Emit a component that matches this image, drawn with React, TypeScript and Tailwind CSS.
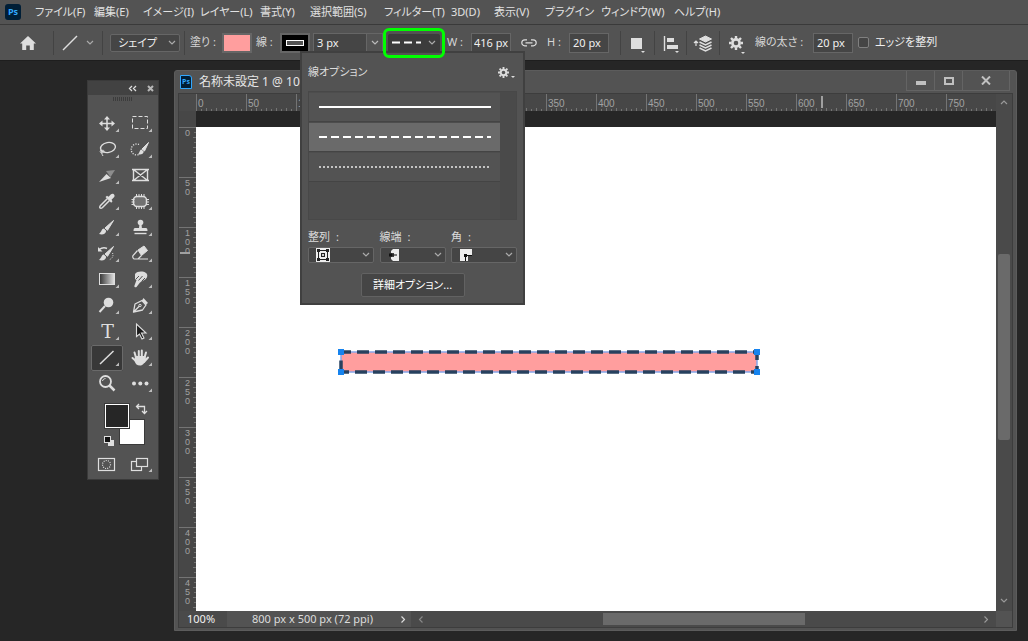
import type { ReactNode } from "react";
import clsx from "clsx";

const menus = [
  { label: "ファイル(F)", width: "w-[59px]" },
  { label: "編集(E)", width: "w-[49px]" },
  { label: "イメージ(I)", width: "w-[57px]" },
  { label: "レイヤー(L)", width: "w-[60px]" },
  { label: "書式(Y)", width: "w-[50px]" },
  { label: "選択範囲(S)", width: "w-[74px]" },
  { label: "フィルター(T)", width: "w-[67px]" },
  { label: "3D(D)", width: "w-[43px]" },
  { label: "表示(V)", width: "w-[51px]" },
  { label: "プラグイン", width: "w-[56px]" },
  { label: "ウィンドウ(W)", width: "w-[73px]" },
  { label: "ヘルプ(H)", width: "w-[59px]" },
];

const topMarks = Array.from({ length: 16 }, (_, i) => i * 50);
const leftMarks = Array.from({ length: 10 }, (_, i) => i * 50);
const minorTicks = [5, 10, 15, 20, 25, 30, 35, 40, 45];

function Chevron({ className }: { className?: string }) {
  return (
    <svg width="8" height="5" viewBox="0 0 8 5" fill="none" className={clsx("pointer-events-none shrink-0", className)}>
      <path d="M1 1l3 3 3-3" stroke="currentColor" strokeWidth="1.2" />
    </svg>
  );
}

function Separator({ className }: { className?: string }) {
  return <span className={clsx("h-6 w-px shrink-0 bg-[#434343]", className)} />;
}

function Gear({ size }: { size: number }) {
  return (
    <svg width={size} height={size} viewBox="0 0 14 14" fill="none" stroke="currentColor">
      <circle cx="7" cy="7" r="3.6" strokeWidth="2.6" />
      <path d="M7 0v2.5M7 11.5V14M0 7h2.5M11.5 7H14M2 2l1.8 1.8M10.2 10.2L12 12M2 12l1.8-1.8M10.2 3.8L12 2" strokeWidth="2.4" />
    </svg>
  );
}

function PsMark({ className }: { className: string }) {
  return (
    <span
      className={clsx(
        "flex shrink-0 items-center justify-center bg-[#001e36] font-[Open_Sans,sans-serif] font-bold text-[#31a8ff]",
        className
      )}
    >
      Ps
    </span>
  );
}

function MenuBar() {
  return (
    <header className="flex h-6 items-center pl-1.25">
      <PsMark className="mr-3.5 h-4 w-4 rounded-[3px] text-[9px]" />
      <nav className="flex">
        {menus.map((m) => (
          <button key={m.label} type="button" className={clsx("text-left text-[11px] whitespace-nowrap text-[#e2e2e2]", m.width)}>
            {m.label}
          </button>
        ))}
      </nav>
    </header>
  );
}

function PxInput({ id, label, value, className }: { id?: string; label?: string; value: string; className?: string }) {
  return (
    <input
      id={id}
      aria-label={label}
      defaultValue={value}
      className={clsx("h-5 shrink-0 border border-[#666] bg-[#454545] text-[11px] text-[#f0f0f0] outline-none", className)}
    />
  );
}

function IconButton({ label, className, children }: { label: string; className?: string; children: ReactNode }) {
  return (
    <button type="button" aria-label={label} className={clsx("shrink-0 text-[#dedede]", className)}>
      <svg width="20" height="20" viewBox="0 0 20 20" fill="none" stroke="currentColor">
        {children}
      </svg>
    </button>
  );
}

function OptionsBar() {
  return (
    <div className="flex h-9 items-center border-t border-[#3a3a3a] pl-4.5 text-[11px] text-[#d6d6d6]">
      <IconButton label="ホーム">
        <path d="M10 3L2 10.5h2.2V17h4v-4.5h3.6V17h4v-6.5H18z" fill="currentColor" stroke="none" />
      </IconButton>
      <Separator className="ml-3.75" />
      <IconButton label="ラインツール" className="ml-1.5">
        <path d="M3 17L17 3" strokeWidth="1.5" />
      </IconButton>
      <Chevron className="ml-1.5 text-[#aaa]" />
      <Separator className="ml-2" />

      <div className="relative ml-1.75 flex shrink-0 items-center">
        <select
          aria-label="ツールモード"
          className="h-4.5 w-17.5 appearance-none rounded-[2px] border border-[#666] bg-[#454545] pl-1.75 text-[11px] text-[#ececec]"
        >
          <option>シェイプ</option>
          <option>パス</option>
        </select>
        <Chevron className="absolute right-1 text-[#aaa]" />
      </div>
      <Separator className="ml-1" />

      <span className="ml-1.25 w-8 shrink-0 whitespace-nowrap">塗り :</span>
      <button type="button" aria-label="塗り" className="h-5 w-7.5 shrink-0 border-2 border-[#666] bg-[#ff9e9e]" />
      <span className="ml-1 w-5.5 shrink-0 whitespace-nowrap">線 :</span>
      <button type="button" aria-label="線" className="ml-0.5 flex h-5 w-7.5 shrink-0 items-center justify-center border-2 border-[#666] bg-black">
        <span className="h-1.5 w-4.5 border border-white bg-[#535353]" />
      </button>

      <PxInput label="線幅" value="3 px" className="ml-0.75 w-13.5 pl-0.75" />
      <button type="button" aria-label="線幅の候補" className="flex h-5 w-4 shrink-0 items-center justify-center border border-l-0 border-[#666] text-[#bbb]">
        <Chevron />
      </button>

      <div className="relative z-20 flex h-7.5 w-15.5 shrink-0 items-center justify-center rounded-[6px] border-3 border-[#0f0]">
        <select aria-label="線の種類" className="h-4.5 w-13 appearance-none rounded-[2px] bg-[#3c3c3c]">
          <option value="dashed" aria-label="破線" />
        </select>
        <svg width="30" height="3" viewBox="0 0 30 3" className="pointer-events-none absolute left-1.5">
          <path d="M0 1.5h8M12 1.5h8M24 1.5h5" stroke="#fff" strokeWidth="2" />
        </svg>
        <Chevron className="absolute right-1.5 text-[#aaa]" />
      </div>

      <span className="ml-0.5 w-6 shrink-0 whitespace-nowrap">W :</span>
      <PxInput label="幅" value="416 px" className="w-10 pl-0.5" />
      <IconButton label="縦横比を固定" className="ml-2">
        <path d="M8 6.800H5.800a3 3 0 000 6H8M12 6.800h2.200a3 3 0 010 6H12M6.500 9.800h7" strokeWidth="1.200" />
      </IconButton>
      <span className="ml-2 w-5.5 shrink-0 whitespace-nowrap">H :</span>
      <PxInput label="高さ" value="20 px" className="w-10 pl-0.75" />

      <Separator className="ml-2.75" />
      <IconButton label="パスの操作" className="ml-1.75">
        <path d="M3 5h11v11H3z" fill="currentColor" stroke="none" />
        <path d="M13 18h4l-2 2z" fill="currentColor" stroke="none" />
      </IconButton>
      <Separator className="ml-1.5" />
      <IconButton label="パスの整列" className="ml-1.75">
        <path d="M2.5 3v15" strokeWidth="1.4" />
        <path d="M5 5h7v4H5zM5 12h11v4H5zM13 18h4l-2 2z" fill="currentColor" stroke="none" />
      </IconButton>
      <Separator className="ml-1" />
      <IconButton label="パスの配置" className="ml-1.5">
        <path d="M3 13V8.5M1 10l2-2 2 2" strokeWidth="1.2" />
        <path d="M6.5 6L12.5 3l6 3-6 3z" fill="currentColor" />
        <path d="M6.5 9l6 3 6-3M6.5 12l6 3 6-3M6.5 15l6 3 6-3" strokeWidth="1.4" />
      </IconButton>
      <Separator className="ml-1.5" />
      <button type="button" aria-label="追加オプション" className="relative ml-2.25 shrink-0 text-[#dedede]">
        <Gear size={14} />
        <svg width="4" height="2" viewBox="0 0 4 2" className="absolute -right-0.5 -bottom-1">
          <path d="M0 0h4L2 2z" fill="currentColor" />
        </svg>
      </button>

      <label htmlFor="weight" className="ml-3 w-14.5 shrink-0 whitespace-nowrap">
        線の太さ :
      </label>
      <PxInput id="weight" value="20 px" className="w-10 pl-0.75" />
      <label className="ml-1.25 flex shrink-0 items-center gap-1.5 whitespace-nowrap text-[#f0f0f0]">
        <input type="checkbox" className="h-2.75 w-2.75 appearance-none rounded-[2px] border border-[#808080] bg-[#454545]" />
        エッジを整列
      </label>
    </div>
  );
}

const brush = (
  <>
    <path d="M22.5 5.5L14 13l2.5 2.3z" fill="currentColor" stroke="currentColor" strokeLinejoin="round" />
    <path d="M13 13.5c-2.5 0-2 3-5 5.5 3.5 1 7 .2 7.2-3.2z" fill="currentColor" stroke="none" />
  </>
);

const tools: { label: string; icon: ReactNode; plain?: boolean; active?: boolean }[] = [
  {
    label: "移動",
    icon: (
      <>
        <path d="M16 7v11M10 12.5h12" strokeWidth="1.5" />
        <path d="M16 5l3 3.5h-6zM16 20l3-3.5h-6zM8 12.5L11.5 9.5v6zM24 12.5L20.5 9.5v6z" fill="currentColor" stroke="none" />
      </>
    ),
  },
  { label: "長方形選択", icon: <rect x="8.5" y="5.5" width="15" height="12" strokeDasharray="4 2" /> },
  {
    label: "なげなわ",
    icon: (
      <>
        <ellipse cx="17" cy="10.5" rx="7.5" ry="5" transform="rotate(-10 17 10.5)" strokeWidth="1.4" />
        <path d="M10 13c-2 2 0 3.5 2 2.5s1-2.5-.5-2.2-1 3.7.5 5.7" />
      </>
    ),
  },
  {
    label: "クイック選択",
    icon: (
      <>
        <path d="M15 7.5a5.500 5.500 0 100 10" strokeDasharray="1.2 1.3" strokeWidth="1.3" />
        <path d="M24.5 5.5L18 12l2.5 2z" fill="currentColor" />
        <path d="M17.5 12.5c-2 .2-1.5 3-3.5 4.8 3 .7 5.6-.3 5.7-2.7z" fill="currentColor" stroke="none" />
      </>
    ),
  },
  {
    label: "スライス",
    icon: (
      <>
        <path d="M8 19l7.5-8 4.5 4z" fill="currentColor" stroke="none" />
        <path d="M15 8l9-1-4.5 7z" fill="#8d8d8d" stroke="none" />
      </>
    ),
  },
  {
    label: "フレーム",
    plain: true,
    icon: <path d="M9.500 6.500h14v11h-14zl14 11M23.500 6.500l-14 11M8 6.500h3M22 6.500h3M8 17.500h3M22 17.500h3" strokeWidth="1.4" />,
  },
  {
    label: "スポイト",
    icon: (
      <>
        <path d="M16.5 9.5l-7 7c-1 1-.8 2.3-.5 2.5s1.5.4 2.500-.5l7-7" strokeWidth="1.5" />
        <path d="M14.5 8l1.5-1.2 1.5 1 2.5-2.5c2-1.8 4.800.8 3 2.900L20.500 10.700l1 1.500-1.300 1.500z" fill="currentColor" stroke="none" />
      </>
    ),
  },
  {
    label: "パッチ",
    icon: (
      <>
        <rect x="9.500" y="7.500" width="13" height="10" rx="3.500" fill="#717171" strokeWidth="1.5" />
        <path d="M12.500 5v3M15 5v3M17.500 5v3M20 5v3M12.500 17v3M15 17v3M17.500 17v3M20 17v3M7.500 10.500h3M7.500 13h3M7.500 15.500h3M22 10.500h3M22 13h3M22 15.500h3" />
      </>
    ),
  },
  { label: "ブラシ", icon: brush },
  {
    label: "スタンプ",
    icon: (
      <>
        <circle cx="16.500" cy="7.500" r="2.800" fill="currentColor" stroke="none" />
        <path d="M15.500 9h2l.4 4H22c1 0 1.500 1 1.500 3h-14c0-2 .5-3 1.500-3h4z" fill="currentColor" stroke="none" />
        <path d="M10.500 18.500h12" strokeWidth="1.4" />
      </>
    ),
  },
  {
    label: "ヒストリーブラシ",
    icon: (
      <>
        {brush}
        <path d="M8 8.500c3-2 6-2 8-1" strokeWidth="1.4" />
        <path d="M7 6v4.500h4.500z" fill="currentColor" stroke="none" />
        <path d="M21.500 12c1.500 3-.5 6-4 7" strokeDasharray="1 1.3" />
      </>
    ),
  },
  {
    label: "消しゴム",
    icon: (
      <>
        <path d="M14 9l6-4 3.500 4.500-6 5z" fill="currentColor" />
        <path d="M13.500 9.500l-4.500 5.200c-.7 1 .2 3.300 1.500 3.300H14l3.500-3.500M11 18h13" strokeWidth="1.2" />
      </>
    ),
  },
  {
    label: "グラデーション",
    icon: (
      <>
        <defs>
          <linearGradient id="ramp">
            <stop offset="0" stopColor="#333" />
            <stop offset="1" stopColor="#e4e4e4" />
          </linearGradient>
        </defs>
        <rect x="8.500" y="6.500" width="15" height="11" fill="url(#ramp)" />
      </>
    ),
  },
  {
    label: "指先",
    icon: (
      <>
        <path d="M11 7c2.500-3 8-3 11-1 2.500 2 1.200 6-2.500 7.500L16 15.500 12.500 20c-1 1-2.800-.2-2-1.500l2-5.500-1.500-1z" fill="currentColor" stroke="none" />
        <path d="M12 12l3-3M14.500 13.500L18.500 9M17.500 14.500l3.500-3.500" stroke="#535353" />
      </>
    ),
  },
  {
    label: "覆い焼き",
    icon: (
      <>
        <circle cx="17.500" cy="9.500" r="4.800" fill="currentColor" stroke="none" />
        <path d="M14 13l-5.500 6" strokeWidth="2" />
      </>
    ),
  },
  {
    label: "ペン",
    icon: (
      <>
        <path d="M9.500 19l1.500-8 7-3.500 4 4.500-3.500 5-9 2 6-6" strokeWidth="1.3" strokeLinejoin="round" />
        <circle cx="16" cy="12.500" r="1.2" />
        <path d="M18 7.500l1.500-2.500 4.500 5-2 1.500z" fill="currentColor" stroke="none" />
      </>
    ),
  },
  {
    label: "テキスト",
    icon: (
      <text x="16.500" y="19" textAnchor="middle" fill="currentColor" stroke="none" className="font-[DejaVu_Serif,serif] text-[19px]">
        T
      </text>
    ),
  },
  {
    label: "パス選択",
    icon: <path d="M12.500 5v12.500l3-2.500 2.500 5 2-1-2.500-5H22z" fill="#1c1c1c" strokeWidth="1.1" />,
  },
  { label: "ライン", active: true, icon: <path d="M9 19L22.500 6" strokeWidth="1.5" /> },
  {
    label: "手のひら",
    icon: (
      <>
        <path d="M12 12.500L10.500 7.500M14.800 11V6M17.800 11V5.500M20.700 12l1.300-4.500M12 16l-3.500-3M20 17l4-4.500" strokeWidth="2" strokeLinecap="round" />
        <path d="M11 11h10.500l.5 3.500c-1.500 3.500-3 6-6 6s-4.500-1.500-5.500-4.500z" fill="currentColor" stroke="none" />
      </>
    ),
  },
  {
    label: "ズーム",
    plain: true,
    icon: (
      <>
        <circle cx="14.500" cy="10.500" r="5.500" strokeWidth="1.8" />
        <path d="M11.500 10c.3-1.500 1.500-2.300 3-2.500" />
        <path d="M18.500 14.500l5 5" strokeWidth="2.5" />
      </>
    ),
  },
  {
    label: "その他",
    icon: (
      <g fill="currentColor" stroke="none">
        <circle cx="10" cy="12.500" r="2" />
        <circle cx="16.300" cy="12.500" r="2" />
        <circle cx="22.500" cy="12.500" r="2" />
      </g>
    ),
  },
];

function Toolbox() {
  return (
    <aside className="absolute top-20 left-[87px] w-18 border border-[#3a3a3a] bg-[#535353] pb-1.5 text-[#dedede]">
      <div className="flex h-3.5 items-center justify-end gap-2.5 bg-[#424242] pr-1">
        <button type="button" aria-label="折りたたむ">
          <svg width="9" height="7" viewBox="0 0 9 7" fill="none" stroke="currentColor">
            <path d="M4 1L1.500 3.500 4 6M8 1L5.500 3.500 8 6" strokeWidth="1.3" />
          </svg>
        </button>
        <button type="button" aria-label="閉じる">
          <svg width="7" height="7" viewBox="0 0 7 7" stroke="#b8b8b8">
            <path d="M1 1l5 5M6 1L1 6" strokeWidth="2" />
          </svg>
        </button>
      </div>
      <div className="mx-auto mt-0.5 h-1 w-5 bg-[repeating-linear-gradient(90deg,#3c3c3c_0_1px,transparent_1px_2px)]" />
      <div className="mt-2.5 grid grid-cols-2 pr-px pl-0.75">
        {tools.map((t) => (
          <button
            key={t.label}
            type="button"
            aria-label={t.label}
            className={clsx("h-6.5 w-8", t.active && "rounded-[2px] bg-[#383838] outline outline-[#6a6a6a] -outline-offset-1")}
          >
            <svg width="32" height="26" viewBox="0 0 32 26" fill="none" stroke="currentColor">
              {t.icon}
              {!t.plain && <path d="M28 17.500v3.500h-3.500z" fill="#bdbdbd" stroke="none" />}
            </svg>
          </button>
        ))}
      </div>
      <svg width="66" height="76" viewBox="0 0 66 76" fill="none" stroke="currentColor" className="ml-0.75">
        <rect x="28.500" y="22.500" width="25" height="25" fill="#fff" stroke="#3a3a3a" />
        <rect x="13.500" y="6.500" width="25" height="25" fill="#262626" stroke="#3a3a3a" />
        <rect x="14.500" y="7.500" width="23" height="23" fill="#262626" stroke="#fff" />
        <path d="M46 9.500h7.500V16M48 7l-2.500 2.500L48 12M51 14l2.500 2.500L56 14" strokeWidth="1.3" />
        <rect x="17" y="43" width="6" height="6" fill="currentColor" stroke="none" />
        <rect x="13.500" y="39.500" width="6" height="6" fill="#111" />
        <rect x="7.500" y="61.500" width="16" height="12" strokeWidth="1.2" />
        <circle cx="15.500" cy="67.500" r="4" strokeDasharray="1 1.2" strokeWidth="1.2" />
        <rect x="40.500" y="64.500" width="10" height="9" strokeWidth="1.2" />
        <rect x="45.500" y="61.500" width="11" height="8" fill="#535353" strokeWidth="1.2" />
        <path d="M61 71.500V75h-3.500z" fill="#bdbdbd" stroke="none" />
      </svg>
    </aside>
  );
}

function TopRuler() {
  return (
    <div className="relative flex h-4.25 min-w-0 flex-1 overflow-hidden bg-[#474747] font-[Liberation_Sans,sans-serif] text-[#a2a2a2]">
      {topMarks.map((n) => (
        <div key={n} className="relative h-full w-12.5 shrink-0 border-l border-[#747474] pl-px">
          <span className="block pt-1 text-[10px] leading-3">{n}</span>
          <svg width="50" height="3" viewBox="0 0 50 3" stroke="#747474" className="absolute bottom-0 left-0">
            {minorTicks.map((x) => (
              <path key={x} d={`M${x - 0.5} ${x % 10 ? 1 : 0}v3`} />
            ))}
          </svg>
        </div>
      ))}
      <span className="absolute top-0.5 left-[625px] h-3 w-0.5 bg-[#a0a0a0]" />
    </div>
  );
}

function LeftRuler() {
  return (
    <div className="relative w-4.25 shrink-0 overflow-hidden bg-[#474747] pt-4 font-[Liberation_Sans,sans-serif] text-[#a2a2a2]">
      {leftMarks.map((n) => (
        <div key={n} className="relative h-12.5 border-t border-[#747474] pt-px">
          <span className="flex flex-col items-center text-[9px] leading-[9px]">
            {String(n)
              .split("")
              .map((d, i) => (
                <span key={i}>{d}</span>
              ))}
          </span>
          <svg width="3" height="50" viewBox="0 0 3 50" stroke="#747474" className="absolute top-0 right-0">
            {minorTicks.map((y) => (
              <path key={y} d={`M${y % 10 ? 1 : 0} ${y - 0.5}h3`} />
            ))}
          </svg>
        </div>
      ))}
      <span className="absolute top-[141px] left-px h-0.5 w-2.5 bg-[#a0a0a0]" />
    </div>
  );
}

function LineShape() {
  return (
    <svg width="424" height="28" viewBox="0 0 424 28" fill="none" className="absolute top-[221px] left-[141px]">
      <path d="M4 4h416v20H4z" fill="#ff9e9e" stroke="#87a6ea" strokeWidth="1.5" />
      <path d="M4 4h416v20H4" stroke="#27415f" strokeWidth="3.5" strokeDasharray="12 6" strokeDashoffset="2" />
      <path d="M4 12.500v9" stroke="#27415f" strokeWidth="3.5" />
      <path d="M1 1h6v6H1zM417 1h6v6h-6zM1 21h6v6H1zM417 21h6v6h-6z" fill="#1683ee" />
    </svg>
  );
}

function DocumentWindow() {
  return (
    <section className="absolute top-[70px] right-[11px] bottom-2.5 left-[174px] flex flex-col rounded-t-[3px] border border-[#5c5c5c] bg-[#535353] px-0.75 pb-0.5">
      <div className="flex h-5.5 shrink-0 items-center pl-0.5">
        <PsMark className="h-3.5 w-3 rounded-tr-[3px] border border-[#31a8ff] text-[7px]" />
        <h1 className="ml-1.75 text-[12px] whitespace-nowrap text-[#e6e6e6]">名称未設定 1 @ 100%</h1>
        <div className="mr-0.75 ml-auto flex h-5 self-start border border-t-0 border-[#646464] text-[#c0c0c0]">
          <button type="button" aria-label="最小化" className="flex w-7 items-center justify-center border-r border-[#646464] pt-1">
            <span className="h-1 w-2.5 bg-current" />
          </button>
          <button type="button" aria-label="最大化" className="flex w-7 items-center justify-center border-r border-[#646464]">
            <span className="h-2 w-2.5 border-2" />
          </button>
          <button type="button" aria-label="ウィンドウを閉じる" className="flex w-11.5 items-center justify-center">
            <svg width="10" height="9" viewBox="0 0 10 9" stroke="currentColor">
              <path d="M1 .5l8 8M9 .5l-8 8" strokeWidth="2" />
            </svg>
          </button>
        </div>
      </div>

      <div className="flex min-h-0 flex-1 flex-col border border-[#3d3d3d] bg-[#474747]">
        <div className="flex shrink-0">
          <div className="h-4.25 w-4.25 shrink-0 bg-[#4a4a4a]" />
          <TopRuler />
          <div className="flex h-4.25 w-4 shrink-0 items-center justify-center bg-[#4a4a4a] text-[#999]">
            <Chevron className="rotate-180" />
          </div>
        </div>
        <div className="flex min-h-0 flex-1">
          <LeftRuler />
          <div className="flex min-w-0 flex-1 flex-col bg-[#262626] pt-4">
            <div className="relative min-h-0 flex-1 overflow-hidden bg-white">
              <LineShape />
            </div>
          </div>
          <div className="flex w-4 shrink-0 flex-col items-center bg-[#4a4a4a] pt-[143px] text-[#999]">
            <div className="h-[186px] w-3 rounded-[2px] bg-[#6a6a6a]" />
            <Chevron className="mt-auto mb-2" />
          </div>
        </div>
        <footer className="flex h-4 shrink-0 items-center bg-[#4a4a4a] text-[11px] text-[#dcdcdc]">
          <span className="w-12 pl-2 text-[#f0f0f0]">100%</span>
          <div className="flex h-full w-46 items-center justify-between bg-[#535353] pr-1 pl-6.25">
            <span className="whitespace-nowrap">800 px x 500 px (72 ppi)</span>
            <Chevron className="-rotate-90" />
          </div>
          <Chevron className="ml-1.5 rotate-90 text-[#888]" />
          <div className="ml-[178px] h-3 w-[202px] bg-[#6a6a6a]" />
          <Chevron className="mr-1.5 ml-auto -rotate-90 text-[#999]" />
          <span className="h-full w-4 bg-[#535353]" />
        </footer>
      </div>
    </section>
  );
}

const strokePresets = [
  { name: "実線", dash: undefined, color: "#fff" },
  { name: "破線", dash: "8 4", color: "#fff" },
  { name: "点線", dash: "2 2", color: "#c4c4c4" },
];

const strokeSelects = [
  {
    label: "整列",
    icon: (
      <>
        <path d="M0 0h14v14H0z" fill="#ededed" />
        <path d="M2.500 2.500h9v9h-9z" fill="none" stroke="#222" />
        <path d="M1 1h3v3H1zM10 1h3v3h-3zM1 10h3v3H1zM10 10h3v3h-3zM5 5h4v4H5z" fill="#222" />
        <path d="M6 6h2v2H6z" fill="#ccc" />
      </>
    ),
  },
  {
    label: "線端",
    icon: (
      <>
        <path d="M5 1h6v12H5l-2-2V9h3V5H3V3z" fill="#ededed" />
        <path d="M1 5.500h3v3H1zM4 6.500h5v1H4z" fill="#111" />
      </>
    ),
  },
  {
    label: "角",
    icon: (
      <>
        <path d="M1 1h12v7H9v5H1z" fill="#ededed" />
        <path d="M5 6h3v3H5zM8 7h5v1H8zM6 9h1v4H6z" fill="#111" />
      </>
    ),
  },
];

function StrokeOptions() {
  return (
    <div
      role="dialog"
      aria-label="線オプション"
      className="absolute top-[51px] left-[300px] z-10 w-[225px] border-2 border-[#404040] bg-[#535353] px-1.5 pb-1.5 text-[11px] text-[#dcdcdc]"
    >
      <div className="flex h-9.5 items-center justify-between pr-0.5">
        <h2>線オプション</h2>
        <button type="button" aria-label="線オプションのメニュー" className="flex items-end gap-0.5">
          <Gear size={11} />
          <svg width="4" height="2" viewBox="0 0 4 2">
            <path d="M0 0h4L2 2z" fill="currentColor" />
          </svg>
        </button>
      </div>
      <div className="flex h-[129px] border border-[#484848] bg-[#4d4d4d]">
        <div className="flex flex-1 flex-col gap-px pt-px">
          {strokePresets.map((p, i) => (
            <button
              key={p.name}
              type="button"
              aria-label={p.name}
              className={clsx("flex h-7.25 items-center border-b border-[#444] pl-2.5", i === 1 ? "bg-[#6a6a6a]" : "bg-[#535353]")}
            >
              <svg width="172" height="2" viewBox="0 0 172 2">
                <path d="M0 1h172" stroke={p.color} strokeWidth="2" strokeDasharray={p.dash} />
              </svg>
            </button>
          ))}
        </div>
        <div className="w-4 bg-[#4a4a4a]" />
      </div>
      <div className="mt-2 flex justify-between">
        {strokeSelects.map((s) => (
          <label key={s.label} className="block w-16.5">
            <span className="flex h-4.5 items-center gap-1.5">
              <span>{s.label}</span>
              <span>:</span>
            </span>
            <span className="relative flex h-4.25 items-center">
              <select aria-label={s.label} className="h-4 w-full appearance-none rounded-[2px] border border-[#666] bg-[#454545]">
                <option value="default" aria-label={s.label} />
              </select>
              <svg width="14" height="14" viewBox="0 0 14 14" className="pointer-events-none absolute left-2">
                {s.icon}
              </svg>
              <Chevron className="absolute right-1 text-[#aaa]" />
            </span>
          </label>
        ))}
      </div>
      <button
        type="button"
        className="mx-auto mt-2.5 block h-6 w-26 rounded-[2px] border border-[#626262] bg-[#454545] whitespace-nowrap text-white"
      >
        詳細オプション...
      </button>
    </div>
  );
}

export default function App() {
  return (
    <div className="relative h-screen overflow-hidden bg-[#262626] font-[Noto_Sans,Noto_Sans_CJK_JP,sans-serif] [font-feature-settings:'palt']">
      <div className="border-b border-[#1e1e1e] bg-[#535353]">
        <MenuBar />
        <OptionsBar />
      </div>
      <Toolbox />
      <DocumentWindow />
      <StrokeOptions />
    </div>
  );
}
